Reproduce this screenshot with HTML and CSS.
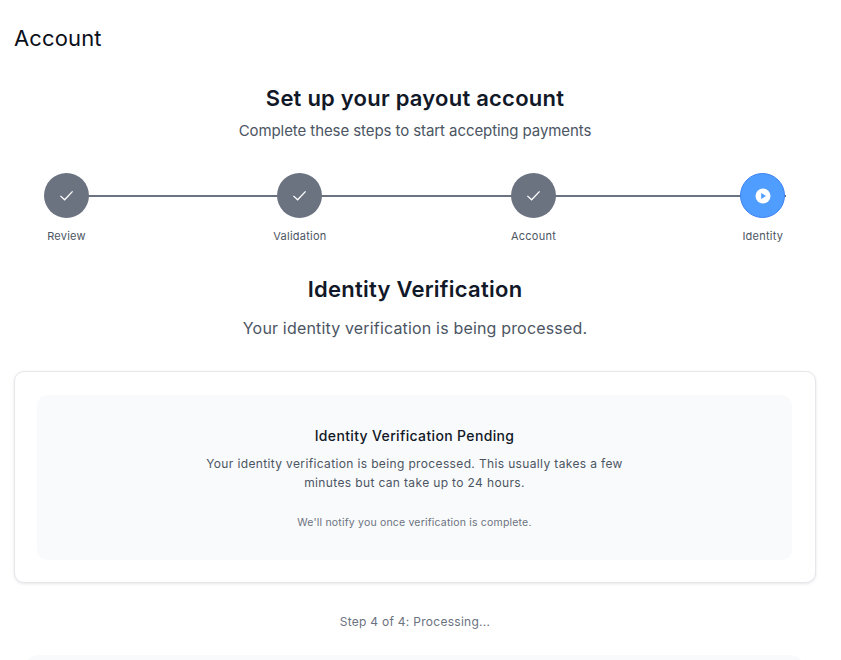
FILE: index.html
```html
<!DOCTYPE html>
<html lang="en">
<head>
<meta charset="utf-8">
<title>Account</title>
<link rel="stylesheet" href="styles.css">
</head>
<body>
<main class="page">
  <h1 class="page-title">Account</h1>
  <header class="intro">
    <h2 class="intro-title">Set up your payout account</h2>
    <p class="intro-sub">Complete these steps to start accepting payments</p>
  </header>
  <ol class="stepper">
    <li class="step">
      <span class="dot"><svg class="check" viewBox="0 0 16 16"><path d="M1.5 8.4 6 12.6 14.5 3.6"/></svg></span>
      <span class="step-label">Review</span>
    </li>
    <li class="step">
      <span class="dot"><svg class="check" viewBox="0 0 16 16"><path d="M1.5 8.4 6 12.6 14.5 3.6"/></svg></span>
      <span class="step-label">Validation</span>
    </li>
    <li class="step">
      <span class="dot"><svg class="check" viewBox="0 0 16 16"><path d="M1.5 8.4 6 12.6 14.5 3.6"/></svg></span>
      <span class="step-label">Account</span>
    </li>
    <li class="step">
      <span class="dot dot-active"><svg class="play" viewBox="0 0 16 16"><circle cx="8" cy="8" r="7.5" fill="#fff"/><path d="M6.2 5v6L11 8z" fill="#4f9dff"/></svg></span>
      <span class="step-label">Identity</span>
    </li>
  </ol>
  <section class="status-head">
    <h2 class="status-title">Identity Verification</h2>
    <p class="status-sub">Your identity verification is being processed.</p>
  </section>
  <section class="card">
    <div class="panel">
      <h3 class="panel-title">Identity Verification Pending</h3>
      <p class="panel-text">Your identity verification is being processed. This usually takes a few minutes but can take up to 24 hours.</p>
      <p class="panel-note">We'll notify you once verification is complete.</p>
    </div>
  </section>
  <p class="progress">Step 4 of 4: Processing...</p>
  <div class="next-clip"><div class="next-panel"></div></div>
</main>
</body>
</html>
```
FILE: styles.css
```css
* { box-sizing: border-box; }
html, body { margin: 0; padding: 0; background: #fff; height: 660px; overflow: hidden; }
body { font-family: "Inter", "Liberation Sans", sans-serif; color: #111827; }
.page { width: 802px; margin-left: 14px; }
.page-title { margin: 0; padding-top: 24px; font-size: 22px; line-height: 28px; font-weight: 400; letter-spacing: .14px; color: #0b0f19; }
.intro { margin-top: 30px; text-align: center; }
.intro-title { margin: 0; font-size: 22px; line-height: 32px; font-weight: 600; letter-spacing: .23px; color: #111827; }
.intro-sub { margin: 7px 0 0; font-size: 15px; line-height: 20px; letter-spacing: -.08px; color: #4b5563; }
.stepper { list-style: none; margin: 32px 0 0; padding: 0 30.7px 0 30px; display: flex; justify-content: space-between; background: linear-gradient(#6b7280, #6b7280) no-repeat 52px 22px / 720px 2px; }
.step { display: flex; flex-direction: column; align-items: center; }
.dot { width: 45px; height: 45px; border-radius: 50%; background: #6b7280; display: flex; align-items: center; justify-content: center; }
.dot-active { background: #4f9dff; border: 1px solid #3b82f6; }
.check { width: 15px; height: 15px; fill: none; stroke: #fff; stroke-width: 1.4; }
.play { width: 16px; height: 16px; }
.step-label { margin-top: 10px; font-size: 11px; line-height: 16px; letter-spacing: .25px; color: #4b5563; white-space: nowrap; }
.status-head { margin-top: 29px; text-align: center; }
.status-title { margin: 0; font-size: 22px; line-height: 32px; font-weight: 600; letter-spacing: .25px; color: #111827; }
.status-sub { margin: 11px 0 0; font-size: 16px; line-height: 24px; letter-spacing: .17px; color: #4b5563; }
.card { margin-top: 31px; height: 212px; padding: 23px 23px 22px 22px; background: #fff; border: 1px solid #e5e7eb; border-radius: 10px; box-shadow: 0 1px 3px rgba(0,0,0,.1); }
.panel { height: 165px; padding: 31px 16px 0; background: #f9fafb; border-radius: 10px; text-align: center; }
.panel-title { margin: 0; font-size: 14px; line-height: 20px; font-weight: 500; letter-spacing: .35px; color: #111827; }
.panel-text { width: 445px; margin: 8px auto 0; font-size: 12px; line-height: 19px; letter-spacing: .36px; color: #4b5563; }
.panel-note { margin: 23px 0 0; font-size: 10.5px; line-height: 16px; letter-spacing: .19px; color: #6b7280; }
.progress { margin: 30px 0 0; text-align: center; font-size: 12px; line-height: 18px; letter-spacing: .28px; color: #6b7280; }
.next-clip { margin: 24px 0 0 9px; width: 783px; height: 5px; overflow: hidden; }
.next-panel { height: 40px; background: #f9fafb; border-radius: 16px; }
```
